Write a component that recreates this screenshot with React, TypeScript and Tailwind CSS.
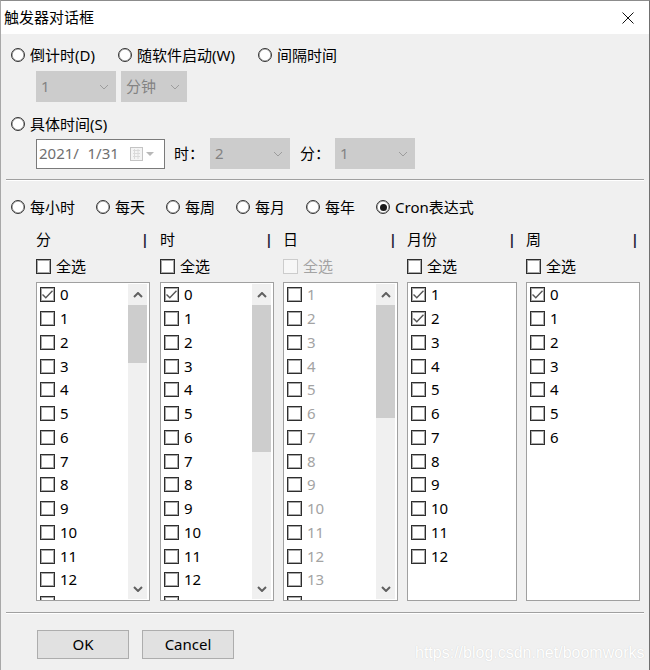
import React from "react";
import clsx from "clsx";

const minutes = Array.from({ length: 13 }, (_, i) => i);
const hours = Array.from({ length: 13 }, (_, i) => i);
const days = Array.from({ length: 13 }, (_, i) => i + 1);
const months = Array.from({ length: 12 }, (_, i) => i + 1);
const weeks = Array.from({ length: 7 }, (_, i) => i);

function Radio({ label, checked = false, className }: { label: string; checked?: boolean; className?: string }) {
  return (
    <div className={clsx("flex items-center h-5 shrink-0", className)}>
      <span className="w-[14px] h-[14px] rounded-full border border-[#333] bg-white shadow-[inset_0_0_0_0.6px_#8a8a8a] flex items-center justify-center shrink-0">
        {checked && <span className="w-[7px] h-[7px] rounded-full bg-[#1a1a1a]" />}
      </span>
      <span className="ml-[5px] text-[15px] text-black whitespace-nowrap">{label}</span>
    </div>
  );
}

function Check({ checked = false, disabled = false }: { checked?: boolean; disabled?: boolean }) {
  return (
    <span
      className={clsx(
        "w-[15px] h-[15px] border flex items-center justify-center shrink-0",
        disabled
          ? "border-[#cccccc] bg-[#f7f7f7]"
          : "border-[#2e2e2e] bg-white shadow-[inset_0_0_0_1px_#a8a8a8]"
      )}
    >
      {checked && (
        <svg width="13" height="13" viewBox="0 0 13 13">
          <polyline points="1.5,6.5 4.8,9.8 11.5,2.8" fill="none" stroke="#555" strokeWidth="1.4" />
        </svg>
      )}
    </span>
  );
}

function Chevron({ up = false, color = "#606060", w = 2 }: { up?: boolean; color?: string; w?: number }) {
  return (
    <svg width="10" height="6" viewBox="0 0 10 6">
      <polyline
        points={up ? "1,5 5,1 9,5" : "1,1 5,5 9,1"}
        fill="none"
        stroke={color}
        strokeWidth={w}
      />
    </svg>
  );
}

function Combo({ value, className }: { value: string; className?: string }) {
  return (
    <div className={clsx("h-[31px] bg-[#cccccc] flex items-center justify-between pl-[5px] pr-[7px] shrink-0", className)}>
      <span className="text-[15px] text-[#838383]">{value}</span>
      <Chevron color="#9c9c9c" w={1} />
    </div>
  );
}

function Scrollbar({ thumb }: { thumb: string }) {
  return (
    <div className="w-[19px] my-[1px] mr-[2px] bg-[#f0f0f0] flex flex-col shrink-0">
      <div className="h-[21px] flex items-center justify-center">
        <Chevron up />
      </div>
      <div className={clsx("bg-[#cdcdcd]", thumb)} />
      <div className="flex-1" />
      <div className="h-[21px] flex items-center justify-center">
        <Chevron />
      </div>
    </div>
  );
}

function ListBox({
  items,
  checked = [],
  disabled = false,
  thumb,
}: {
  items: number[];
  checked?: number[];
  disabled?: boolean;
  thumb?: string;
}) {
  return (
    <div className="h-[319px] border border-[#a0a0a0] bg-white flex overflow-hidden">
      <div className="flex-1 flex flex-col overflow-hidden">
        {items.map((n) => (
          <div key={n} className="h-[23.75px] shrink-0 flex items-center pl-[3px]">
            <Check checked={checked.includes(n)} />
            <span className={clsx("ml-[5px] text-[15px] leading-none", disabled ? "text-[#a3a3a3]" : "text-black")}>
              {n}
            </span>
          </div>
        ))}
        {/* next row, scrolled out of view */}
        {thumb && (
          <div className="h-[23.75px] shrink-0 flex items-center pl-[3px]">
            <Check />
          </div>
        )}
      </div>
      {thumb && <Scrollbar thumb={thumb} />}
    </div>
  );
}

function Column({
  title,
  className,
  disabled = false,
  children,
}: {
  title: string;
  className: string;
  disabled?: boolean;
  children: React.ReactNode;
}) {
  return (
    <div className={clsx("flex flex-col shrink-0", className)}>
      <div className="h-5 flex items-center justify-between text-[15px] text-black">
        <span>{title}</span>
        <span className="pr-[1px] font-bold text-[#26263a]">|</span>
      </div>
      <div className="mt-[7px] h-5 flex items-center">
        <Check disabled={disabled} />
        <span className={clsx("ml-[5px] text-[15px]", disabled ? "text-[#a3a3a3]" : "text-black")}>全选</span>
      </div>
      <div className="mt-[6px]">{children}</div>
    </div>
  );
}

function Separator() {
  return <div className="mx-[5px] border-t border-t-[#a0a0a0] border-b border-b-white" />;
}

export default function App() {
  return (
    <div className="relative w-[650px] h-[670px] overflow-hidden bg-[#f0f0f0] border-l border-l-[#a8a8a8] border-t border-t-[#8c8c8c] border-r border-r-[#707070] font-['Noto_Sans','Noto_Sans_CJK_SC',sans-serif] text-black">
      {/* title bar */}
      <div className="h-[33px] bg-white flex items-center justify-between pl-[3px] pr-[15px]">
        <span className="text-[15px]">触发器对话框</span>
        <svg width="12" height="12" viewBox="0 0 12 12">
          <path d="M0.5 0.5L11.5 11.5M11.5 0.5L0.5 11.5" stroke="#111" strokeWidth="1" fill="none" />
        </svg>
      </div>

      {/* 倒计时 / 随软件启动 / 间隔时间 */}
      <div className="mt-[11px] pl-[10px] flex">
        <Radio label="倒计时(D)" className="w-[107px]" />
        <Radio label="随软件启动(W)" className="w-[140px]" />
        <Radio label="间隔时间" />
      </div>
      <div className="mt-[6px] pl-[35px] flex gap-[5px]">
        <Combo value="1" className="w-[80px]" />
        <Combo value="分钟" className="w-[66px] pl-[4px]" />
      </div>

      {/* 具体时间 */}
      <div className="mt-[12px] pl-[10px] flex">
        <Radio label="具体时间(S)" />
      </div>
      <div className="mt-[4px] pl-[35px] h-[31px] flex items-center">
        <div className="w-[129px] h-[30px] bg-white border border-[#7a7a7a] flex items-center pl-[2px] shrink-0">
          <span className="text-[15px] text-[#6f6f6f] whitespace-pre">2021/{"\u2007"}1/31</span>
          <span className="ml-[11px] flex items-center">
            <svg width="26" height="14" viewBox="0 0 26 14">
              <rect x="0.5" y="0.5" width="12" height="13" fill="#f4f4f4" stroke="#c4c4c4" />
              <path d="M3 3.5H10M3 6.5H10M3 9.5H10M4.5 2V12M8 2V12" stroke="#dadada" strokeWidth="1" />
              <polygon points="16,5 24,5 20,9" fill="#b8b8b8" />
            </svg>
          </span>
        </div>
        <span className="ml-[9px] text-[15px] w-[36px] shrink-0">时：</span>
        <Combo value="2" className="w-[80px]" />
        <span className="ml-[10px] text-[15px] w-[35px] shrink-0">分：</span>
        <Combo value="1" className="w-[80px]" />
      </div>

      <div className="mt-[10px]">
        <Separator />
      </div>

      {/* 周期 */}
      <div className="mt-[16px] pl-[10px] flex">
        <Radio label="每小时" className="w-[85px]" />
        <Radio label="每天" className="w-[70px]" />
        <Radio label="每周" className="w-[70px]" />
        <Radio label="每月" className="w-[70px]" />
        <Radio label="每年" className="w-[70px]" />
        <Radio label="Cron表达式" checked />
      </div>

      {/* cron columns */}
      <div className="mt-[12px] pl-[35px] flex">
        <Column title="分" className="w-[114px]">
          <ListBox items={minutes} checked={[0]} thumb="h-[58px]" />
        </Column>
        <Column title="时" className="w-[114px] ml-[10px]">
          <ListBox items={hours} checked={[0]} thumb="h-[147px]" />
        </Column>
        <Column title="日" className="w-[115px] ml-[9px]" disabled>
          <ListBox items={days} disabled thumb="h-[113px]" />
        </Column>
        <Column title="月份" className="w-[110px] ml-[9px]">
          <ListBox items={months} checked={[1, 2]} />
        </Column>
        <Column title="周" className="w-[114px] ml-[9px]">
          <ListBox items={weeks} checked={[0]} />
        </Column>
      </div>

      <div className="mt-[11px]">
        <Separator />
      </div>

      {/* buttons */}
      <div className="mt-[16px] pl-[36px] flex gap-[13px]">
        <button className="w-[92px] h-[29px] bg-[#e1e1e1] border border-[#adadad] text-[15px] text-black flex items-center justify-center">
          OK
        </button>
        <button className="w-[92px] h-[29px] bg-[#e1e1e1] border border-[#adadad] text-[15px] text-black flex items-center justify-center">
          Cancel
        </button>
      </div>

      {/* watermark */}
      <div className="absolute left-[414px] top-[641px] leading-[22px] text-[16px] text-white font-['Liberation_Sans',sans-serif] [text-shadow:0_0_1px_#c9c9c9] whitespace-nowrap">
        https://blog.csdn.net/boomworks
      </div>
    </div>
  );
}
